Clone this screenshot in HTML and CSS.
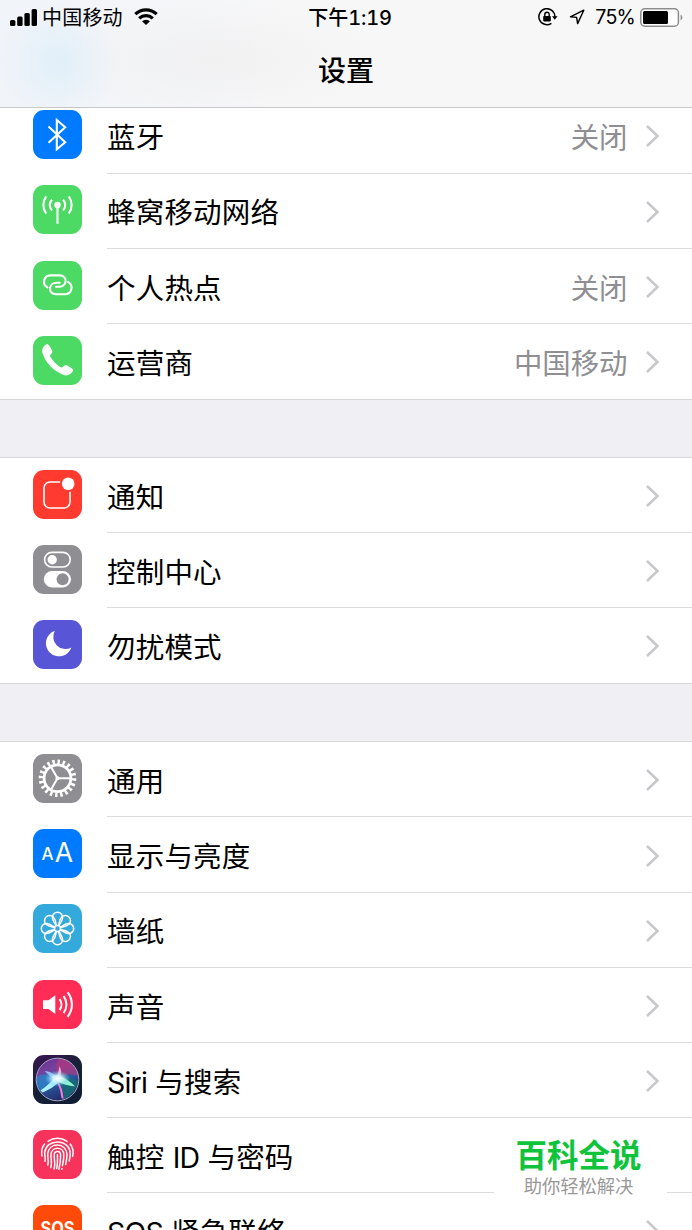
FILE: index.html
```html
<!DOCTYPE html>
<html lang="zh-CN">
<head>
    <meta charset="UTF-8">
    <meta name="viewport" content="width=device-width, initial-scale=1.0">
    <title>设置</title>
    <link rel="stylesheet" href="styles.css">
</head>
<body>

    <header>
        <div class="status">
            <div class="left">
                <svg class="signal" width="27" height="17" viewBox="0 0 27 17">
                    <rect x="0" y="11" width="5.4" height="6" rx="1.5"/>
                    <rect x="7.2" y="7.5" width="5.4" height="9.5" rx="1.5"/>
                    <rect x="14.4" y="4" width="5.4" height="13" rx="1.5"/>
                    <rect x="21.6" y="0" width="5.4" height="17" rx="1.5"/>
                </svg>
                <span class="carrier">中国移动</span>
                <svg class="wifi" width="24" height="17" viewBox="0 0 24 17">
                    <g fill="none" stroke="#000" stroke-width="3.2">
                        <path d="M1.3 6.2A15.5 15.5 0 0 1 22.7 6.2"/>
                        <path d="M5.2 10.3A10 10 0 0 1 18.8 10.3"/>
                    </g>
                    <path d="M8 13.2A6 6 0 0 1 16 13.2L12 17z"/>
                </svg>
            </div>
            <div class="time">下午<span>1:19</span></div>
            <div class="right">
                <svg class="lock" width="20" height="18" viewBox="0 0 20 18">
                    <path d="M16.9 9A8 8 0 1 0 13.4 15.3" fill="none" stroke="#000" stroke-width="1.5"/>
                    <path d="M14 8.2h5.6l-2.8 3.6z"/>
                    <rect x="5.2" y="8" width="7.6" height="5.4" rx=".8"/>
                    <path d="M6.8 8V6.4a2.2 2.2 0 0 1 4.4 0V8" fill="none" stroke="#000" stroke-width="1.4"/>
                </svg>
                <svg class="arrow" width="16" height="16" viewBox="0 0 16 16">
                    <path d="M14.8 1.2L1.4 7.8L7.6 8.4L8.6 14.6z" fill="none" stroke="#000" stroke-width="1.4" stroke-linejoin="round"/>
                </svg>
                <span class="percent">75%</span>
                <svg class="battery" width="44" height="19" viewBox="0 0 44 19">
                    <rect x=".8" y=".8" width="37.6" height="17.4" rx="4" fill="#fff" stroke="#8d8d8f" stroke-width="1.5"/>
                    <rect x="3" y="3" width="25" height="13" rx="1.5"/>
                    <path d="M40.6 6.5a3.4 3.4 0 0 1 0 6z" fill="#8d8d8f"/>
                </svg>
            </div>
        </div>
        <h1>设置</h1>
    </header>

    <main>
        <section class="group">
            <article class="row">
                <svg class="icon blue" viewBox="0 0 49 49">
                    <path class="line" d="M15.5 16.6L32.2 32.2L23.8 39.2V10L32.2 17.3L15.5 32.8"/>
                </svg>
                <div class="cell"><h3>蓝牙</h3><p>关闭</p><svg class="chevron" viewBox="0 0 15 24"><path d="M2 2L12.5 12L2 22"/></svg></div>
            </article>
            <article class="row">
                <svg class="icon green" viewBox="0 0 49 49">
                    <circle class="fill" cx="24.5" cy="20" r="3.2"/>
                    <path class="line" d="M24.5 20V38.8M19 14.5A8 8 0 0 0 19 25.5M30 14.5A8 8 0 0 1 30 25.5M13.2 11.4A14.5 14.5 0 0 0 13.2 28.6M35.8 11.4A14.5 14.5 0 0 1 35.8 28.6"/>
                </svg>
                <div class="cell"><h3>蜂窝移动网络</h3><svg class="chevron" viewBox="0 0 15 24"><path d="M2 2L12.5 12L2 22"/></svg></div>
            </article>
            <article class="row">
                <svg class="icon green" viewBox="0 0 49 49">
                    <g class="line" stroke-linecap="round">
                        <path d="M14.4 26.4A6.4 6.4 0 0 1 17.2 14.4H26.6C30.4 14.4 33 17 32.6 20.4C32.2 24 29 25.8 26 25.8H23"/>
                        <path d="M14.4 26.4A6.4 6.4 0 0 1 17.2 14.4H26.6C30.4 14.4 33 17 32.6 20.4C32.2 24 29 25.8 26 25.8H23" transform="rotate(180 24.8 23.8)"/>
                    </g>
                </svg>
                <div class="cell"><h3>个人热点</h3><p>关闭</p><svg class="chevron" viewBox="0 0 15 24"><path d="M2 2L12.5 12L2 22"/></svg></div>
            </article>
            <article class="row">
                <svg class="icon green" viewBox="0 0 49 49">
                    <path class="fill" d="M13 8.6C14.3 7.8 15.5 8.4 16.4 9.8L19 14.2C20 16 19.2 17 17.6 18.6C16.8 19.5 17 20.4 17.8 21.6C20 25 23.2 28.3 26.8 30.8C28.2 31.8 29.3 31.7 30.3 30.6C31.8 29 32.8 28.6 34.4 29.6L38.6 32.2C40.2 33.2 40.5 34.4 39.7 35.6C37.8 38.6 34.2 40.4 30.6 39C20.6 35.3 12.8 27.4 9.6 17.6C8.5 14 9.9 10.6 13 8.6z"/>
                </svg>
                <div class="cell"><h3>运营商</h3><p>中国移动</p><svg class="chevron" viewBox="0 0 15 24"><path d="M2 2L12.5 12L2 22"/></svg></div>
            </article>
        </section>

        <section class="group">
            <article class="row">
                <svg class="icon red" viewBox="0 0 49 49">
                    <path class="line thin" d="M27.2 12H17A6 6 0 0 0 11 18V32A6 6 0 0 0 17 38H31A6 6 0 0 0 37 32V21.8"/>
                    <circle class="fill" cx="35.2" cy="13.8" r="6.3"/>
                </svg>
                <div class="cell"><h3>通知</h3><svg class="chevron" viewBox="0 0 15 24"><path d="M2 2L12.5 12L2 22"/></svg></div>
            </article>
            <article class="row">
                <svg class="icon gray" viewBox="0 0 49 49">
                    <rect class="line thin" x="11.6" y="7.4" width="25.6" height="14.6" rx="7.3"/>
                    <circle class="fill" cx="19.2" cy="14.7" r="4.7"/>
                    <rect class="fill" x="10.8" y="26" width="27.2" height="16.4" rx="8.2"/>
                    <circle cx="29.6" cy="34.2" r="6" fill="#8e8e93"/>
                </svg>
                <div class="cell"><h3>控制中心</h3><svg class="chevron" viewBox="0 0 15 24"><path d="M2 2L12.5 12L2 22"/></svg></div>
            </article>
            <article class="row">
                <svg class="icon purple" viewBox="0 0 49 49">
                    <path class="fill" d="M21.8 10.8A13.1 13.1 0 1 0 38.4 27.4A12.2 12.2 0 0 1 21.8 10.8z"/>
                </svg>
                <div class="cell"><h3>勿扰模式</h3><svg class="chevron" viewBox="0 0 15 24"><path d="M2 2L12.5 12L2 22"/></svg></div>
            </article>
        </section>

        <section class="group">
            <article class="row">
                <svg class="icon gray" viewBox="0 0 49 49">
                    <circle class="line ring" cx="24.5" cy="24.3" r="13.4"/>
                    <circle class="teeth" cx="24.5" cy="24.3" r="16.4" pathLength="80"/>
                    <path class="line" d="M24.5 24.3H38M24.5 24.3L17.8 12.6M24.5 24.3L17.8 36"/>
                    <circle class="fill" cx="24.5" cy="24.3" r="2"/>
                </svg>
                <div class="cell"><h3>通用</h3><svg class="chevron" viewBox="0 0 15 24"><path d="M2 2L12.5 12L2 22"/></svg></div>
            </article>
            <article class="row">
                <svg class="icon blue" viewBox="0 0 49 49">
                    <text x="8.4" y="30.8" font-size="17" font-weight="500">A</text>
                    <text x="21.8" y="32.8" font-size="26.5">A</text>
                </svg>
                <div class="cell"><h3>显示与亮度</h3><svg class="chevron" viewBox="0 0 15 24"><path d="M2 2L12.5 12L2 22"/></svg></div>
            </article>
            <article class="row">
                <svg class="icon cyan" viewBox="0 0 49 49">
                    <g class="line flower">
                        <circle cx="24.5" cy="24.5" r="3"/>
                        <path id="petal" d="M23 21.8C22.6 19.4 19.4 17.4 19.4 13.4A5.1 5.1 0 0 1 29.6 13.4C29.6 17.4 26.4 19.4 26 21.8"/>
                        <use href="#petal" transform="rotate(45 24.5 24.5)"/>
                        <use href="#petal" transform="rotate(90 24.5 24.5)"/>
                        <use href="#petal" transform="rotate(135 24.5 24.5)"/>
                        <use href="#petal" transform="rotate(180 24.5 24.5)"/>
                        <use href="#petal" transform="rotate(225 24.5 24.5)"/>
                        <use href="#petal" transform="rotate(270 24.5 24.5)"/>
                        <use href="#petal" transform="rotate(315 24.5 24.5)"/>
                    </g>
                </svg>
                <div class="cell"><h3>墙纸</h3><svg class="chevron" viewBox="0 0 15 24"><path d="M2 2L12.5 12L2 22"/></svg></div>
            </article>
            <article class="row">
                <svg class="icon pink" viewBox="0 0 49 49">
                    <path class="fill" d="M10 20.2H15.5L22.3 15.2V34L15.5 29H10z"/>
                    <path class="line" d="M26.6 19.2A9 9 0 0 1 26.6 30M30.6 16A14.5 14.5 0 0 1 30.6 33.2M34.6 12.4A19.5 19.5 0 0 1 34.6 36.8"/>
                </svg>
                <div class="cell"><h3>声音</h3><svg class="chevron" viewBox="0 0 15 24"><path d="M2 2L12.5 12L2 22"/></svg></div>
            </article>
            <article class="row">
                <svg class="icon siri" viewBox="0 0 49 49">
                    <defs>
                        <linearGradient id="orb" x1="0" y1="0" x2=".4" y2="1">
                            <stop offset="0" stop-color="#6a2e8e"/>
                            <stop offset=".35" stop-color="#74429c"/>
                            <stop offset=".65" stop-color="#2a5aa0"/>
                            <stop offset="1" stop-color="#24306e"/>
                        </linearGradient>
                        <radialGradient id="glow">
                            <stop offset="0" stop-color="#fff"/>
                            <stop offset=".4" stop-color="#d4f6ff" stop-opacity=".85"/>
                            <stop offset="1" stop-color="#5ac8e8" stop-opacity="0"/>
                        </radialGradient>
                    </defs>
                    <circle cx="24.5" cy="24.5" r="21.3" fill="url(#orb)"/>
                    <path d="M24.5 24C22 14 23 5 27 3.5C37 5 44 12 45 21C38 18 31 19 24.5 24z" fill="#b8357a" opacity=".65"/>
                    <path d="M24.5 24C32 21 41 23 45.3 27C43 35 38 41 31 44.5C31 37 29 30 24.5 24z" fill="#147074" opacity=".8"/>
                    <path d="M24.5 24C17 18 9 18 4 22C3 28 5 32 8 36C12 30 18 26 24.5 24z" fill="#2a86cf" opacity=".75"/>
                    <path d="M24 20C19 26 14 31 7.5 35.4L9.6 37.5C16 35 22 31 27 26z" fill="#a9f0ff"/>
                    <path d="M22 23C27 28 30 34 30.6 44L28.4 43C27.5 35 26 30 22 25z" fill="#ee7fd8"/>
                    <path d="M23 20C31 22 38 27 42 31.5C36 31 29 29 23 26z" fill="#8ff2cf"/>
                    <path d="M22.4 24C25 19 26 15 26.6 11C29 17 28.6 21 26 25z" fill="#f1b0e4"/>
                    <path d="M24 25C19 23 15 20 11.6 16C18 16.6 22 19.6 25 23z" fill="#8fb8f2"/>
                    <ellipse cx="24.5" cy="23.6" rx="13" ry="8" fill="url(#glow)"/>
                    <circle cx="24.5" cy="24.5" r="21.3" fill="none" stroke="#a9a4c4" stroke-width="1"/>
                </svg>
                <div class="cell"><h3><span class="latin">Siri</span> 与搜索</h3><svg class="chevron" viewBox="0 0 15 24"><path d="M2 2L12.5 12L2 22"/></svg></div>
            </article>
            <article class="row">
                <svg class="icon rose" viewBox="0 0 49 49">
                    <g class="line print">
                        <path d="M15 11.4A16.4 16.4 0 0 1 34 11.4"/>
                        <path d="M9 26C8 20.6 9.2 16.8 11.6 14M37.2 14C40 17.6 40.8 22 39.6 26.4"/>
                        <path d="M12 31.2C12.8 28 11.4 26 11.8 22C12.6 15.8 17.8 11.9 24.4 11.9C31.6 11.9 37 16.6 37.2 23.4C37.3 26.5 36.6 29 36.2 31"/>
                        <path d="M14.8 35C16 31 14.4 27 14.8 23.6C15.4 18.2 19.4 15.1 24.4 15.1C30 15.1 33.8 19 34 24.2C34.1 28.6 33.2 31.6 32.6 34.6"/>
                        <path d="M17.8 37.6C19.4 33.4 17.6 28.6 18 24.4C18.4 20.8 21 18.3 24.4 18.3C28.2 18.3 30.7 21 30.8 24.6C31 29 30.2 32.4 29.4 35.8"/>
                        <path d="M21 39C22.8 34.6 21 29.4 21.2 25C21.3 22.8 22.6 21.5 24.4 21.5C26.4 21.5 27.6 22.9 27.6 25C27.8 30 27.2 34 25.8 39.2"/>
                        <path d="M24.4 24.8C24.6 30 24.8 34 23.6 38.6M29 38.6L28.8 39.2"/>
                    </g>
                </svg>
                <div class="cell"><h3>触控 <span class="latin">ID</span> 与密码</h3><svg class="chevron" viewBox="0 0 15 24"><path d="M2 2L12.5 12L2 22"/></svg></div>
            </article>
            <article class="row">
                <svg class="icon orange" viewBox="0 0 49 49">
                    <text x="24.5" y="30" text-anchor="middle" font-size="18.5" font-weight="700" textLength="34" lengthAdjust="spacingAndGlyphs">SOS</text>
                </svg>
                <div class="cell"><h3><span class="latin">SOS</span> 紧急联络</h3><svg class="chevron" viewBox="0 0 15 24"><path d="M2 2L12.5 12L2 22"/></svg></div>
            </article>
        </section>
    </main>

    <!-- logo oven på listen -->
    <div class="brand">
        <strong>百科全说</strong>
        <span>助你轻松解决</span>
    </div>

</body>
</html>
```
FILE: styles.css
```css
* {
    box-sizing: border-box;
}

body {
    margin: 0;
    height: 1230px;
    overflow: hidden;
    display: flex;
    flex-direction: column;
    position: relative;
    background-color: #efeff4;
    font-family: Inter, 'Noto Sans CJK SC', sans-serif;
    color: #000;
}

h1, h3, p {
    margin: 0;
    font-weight: 400;
}

header {
    flex: none;
    height: 108px;
    border-bottom: 1px solid #c8c8cb;
    background:
        radial-gradient(ellipse 60px 60px at 58px 62px, #e0eff9, rgba(224, 239, 249, 0)),
        radial-gradient(ellipse 170px 60px at 210px 60px, #f1f1f2, rgba(241, 241, 242, 0)),
        linear-gradient(to right, #f1f4f9, #f7f7f8 40%);
}

.status {
    display: grid;
    grid-template-columns: 1fr auto 1fr;
    align-items: center;
    height: 34px;
    padding: 0 8px 0 10px;
    font-size: 20px;
}

.left, .right {
    display: flex;
    align-items: center;
}

.right {
    justify-content: flex-end;
}

.carrier {
    margin: -2px 0 0 5px;
    letter-spacing: 0.2px;
}

.wifi {
    margin-left: 11px;
    margin-top: -2px;
}

.time {
    margin-top: -2px;
    padding-left: 6px;
    font-weight: 500;
}

.time span {
    font-variant-numeric: tabular-nums;
    letter-spacing: -0.2px;
}

.lock {
    margin-right: 1px;
}

.arrow {
    margin-left: 10px;
}

.percent {
    margin: 0 5px 0 10px;
    font-size: 19.6px;
    letter-spacing: -0.8px;
}

h1 {
    padding-top: 1px;
    font-size: 28px;
    font-weight: 500;
    line-height: 72px;
    text-align: center;
}

main {
    flex: 1;
    overflow: hidden;
}

.group {
    margin-bottom: 58.8px;
    background-color: #fff;
    box-shadow: 0 -1px #d8d8db, 0 1px #d8d8db;
}

/* first rows are scrolled a little under the header */
.group:first-child {
    margin-top: -9.7px;
}

.row {
    display: flex;
    height: 75.2px;
    padding-left: 33px;
}

.icon {
    flex: none;
    width: 49px;
    height: 49px;
    margin-top: 11.9px;
    border-radius: 11px;
}

.cell {
    flex: 1;
    display: flex;
    align-items: center;
    margin-left: 25px;
    padding-right: 32.5px;
    border-bottom: 1px solid #dcdcdf;
}

.row:last-child .cell {
    border-bottom: 0;
    padding-bottom: 1px;
}

.cell h3 {
    flex: 1;
    font-size: 28.5px;
    letter-spacing: 0.2px;
    line-height: 40px;
    padding-top: 5.6px;
}

.cell p {
    font-size: 28.4px;
    line-height: 40px;
    padding-top: 5.6px;
    color: #8e8e93;
}

.latin {
    letter-spacing: -0.8px;
}

.chevron {
    width: 15px;
    height: 24px;
    margin-left: 17px;
    margin-top: 2px;
}

.chevron path {
    fill: none;
    stroke: #c7c7cc;
    stroke-width: 2.5;
}

.blue { background-color: #007aff; }
.green { background-color: #4cd964; }
.red { background-color: #ff3b30; }
.gray { background-color: #8e8e93; }
.purple { background-color: #5856d6; }
.cyan { background-color: #34aadc; }
.pink { background-color: #ff2d55; }
.rose { background-color: #f7335b; }
.orange { background-color: #ff4a0a; }

.siri {
    background: linear-gradient(150deg, #3c1452, #172238 45%, #0e1c33);
}

.line {
    fill: none;
    stroke: #fff;
    stroke-width: 2.1;
}

.thin {
    stroke-width: 1.6;
}

.ring {
    stroke-width: 2.8;
}

.fill {
    fill: #fff;
}

.teeth {
    fill: none;
    stroke: #fff;
    stroke-width: 4.8;
    stroke-dasharray: 2 2.2;
    stroke-dasharray: 1.9 2.1;
}

.flower {
    stroke-width: 1.5;
}

.print {
    stroke-width: 1.5;
    stroke-linecap: round;
}

.icon text {
    fill: #fff;
}

.brand {
    position: absolute;
    left: 494px;
    top: 1130px;
    width: 173px;
    height: 76px;
    padding-right: 4px;
    display: flex;
    flex-direction: column;
    align-items: center;
    background-color: #fff;
}

.brand strong {
    font-size: 31.5px;
    line-height: 36px;
    margin-top: 8px;
    color: #0fc43a;
}

.brand span {
    font-size: 18.3px;
    line-height: 24px;
    color: #999;
}
```
